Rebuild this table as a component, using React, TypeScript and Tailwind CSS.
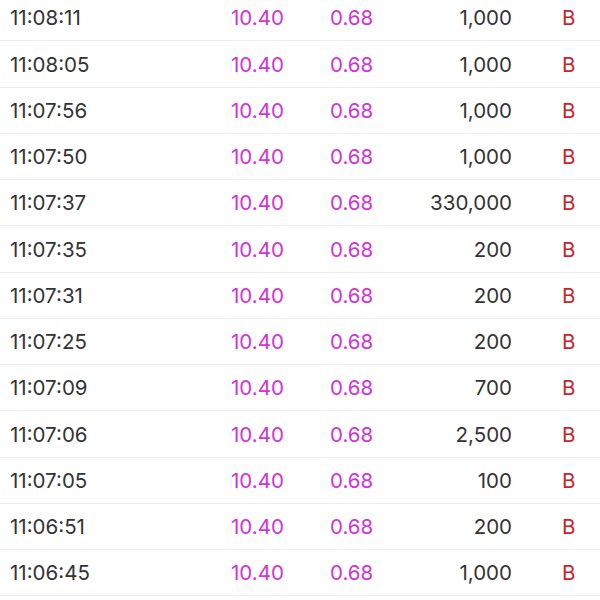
import React from 'react';

interface Trade {
    time: string;
    price: string;
    change: string;
    volume: string;
    side: string;
}

const trades: Trade[] = [
    {time: '11:08:11', price: '10.40', change: '0.68', volume: '1,000', side: 'B'},
    {time: '11:08:05', price: '10.40', change: '0.68', volume: '1,000', side: 'B'},
    {time: '11:07:56', price: '10.40', change: '0.68', volume: '1,000', side: 'B'},
    {time: '11:07:50', price: '10.40', change: '0.68', volume: '1,000', side: 'B'},
    {time: '11:07:37', price: '10.40', change: '0.68', volume: '330,000', side: 'B'},
    {time: '11:07:35', price: '10.40', change: '0.68', volume: '200', side: 'B'},
    {time: '11:07:31', price: '10.40', change: '0.68', volume: '200', side: 'B'},
    {time: '11:07:25', price: '10.40', change: '0.68', volume: '200', side: 'B'},
    {time: '11:07:09', price: '10.40', change: '0.68', volume: '700', side: 'B'},
    {time: '11:07:06', price: '10.40', change: '0.68', volume: '2,500', side: 'B'},
    {time: '11:07:05', price: '10.40', change: '0.68', volume: '100', side: 'B'},
    {time: '11:06:51', price: '10.40', change: '0.68', volume: '200', side: 'B'},
    {time: '11:06:45', price: '10.40', change: '0.68', volume: '1,000', side: 'B'},
];

const App: React.FC = () => {
    return (
        <div className="w-[600px] h-[600px] overflow-hidden bg-white"
             style={{fontFamily: 'Inter, "Liberation Sans", sans-serif'}}>
            <div className="-mt-[5px] flex flex-col">
                {trades.map((t, i) => (
                    <div key={i}
                         className="flex items-center h-[46.25px] pt-[2px] shrink-0 border-b border-[#ededed] text-[20.5px] leading-none">
                        <div className="w-[231px] pl-[10px] text-[#333333]">{t.time}</div>
                        <div className="w-[99px] text-[#d133d4]">{t.price}</div>
                        <div className="w-[100px] text-[#d133d4]">{t.change}</div>
                        <div className="w-[82px] text-right text-[#333333]">{t.volume}</div>
                        <div className="ml-[50px] text-[#c4262e]">{t.side}</div>
                    </div>
                ))}
            </div>
        </div>
    );
};

export default App;
